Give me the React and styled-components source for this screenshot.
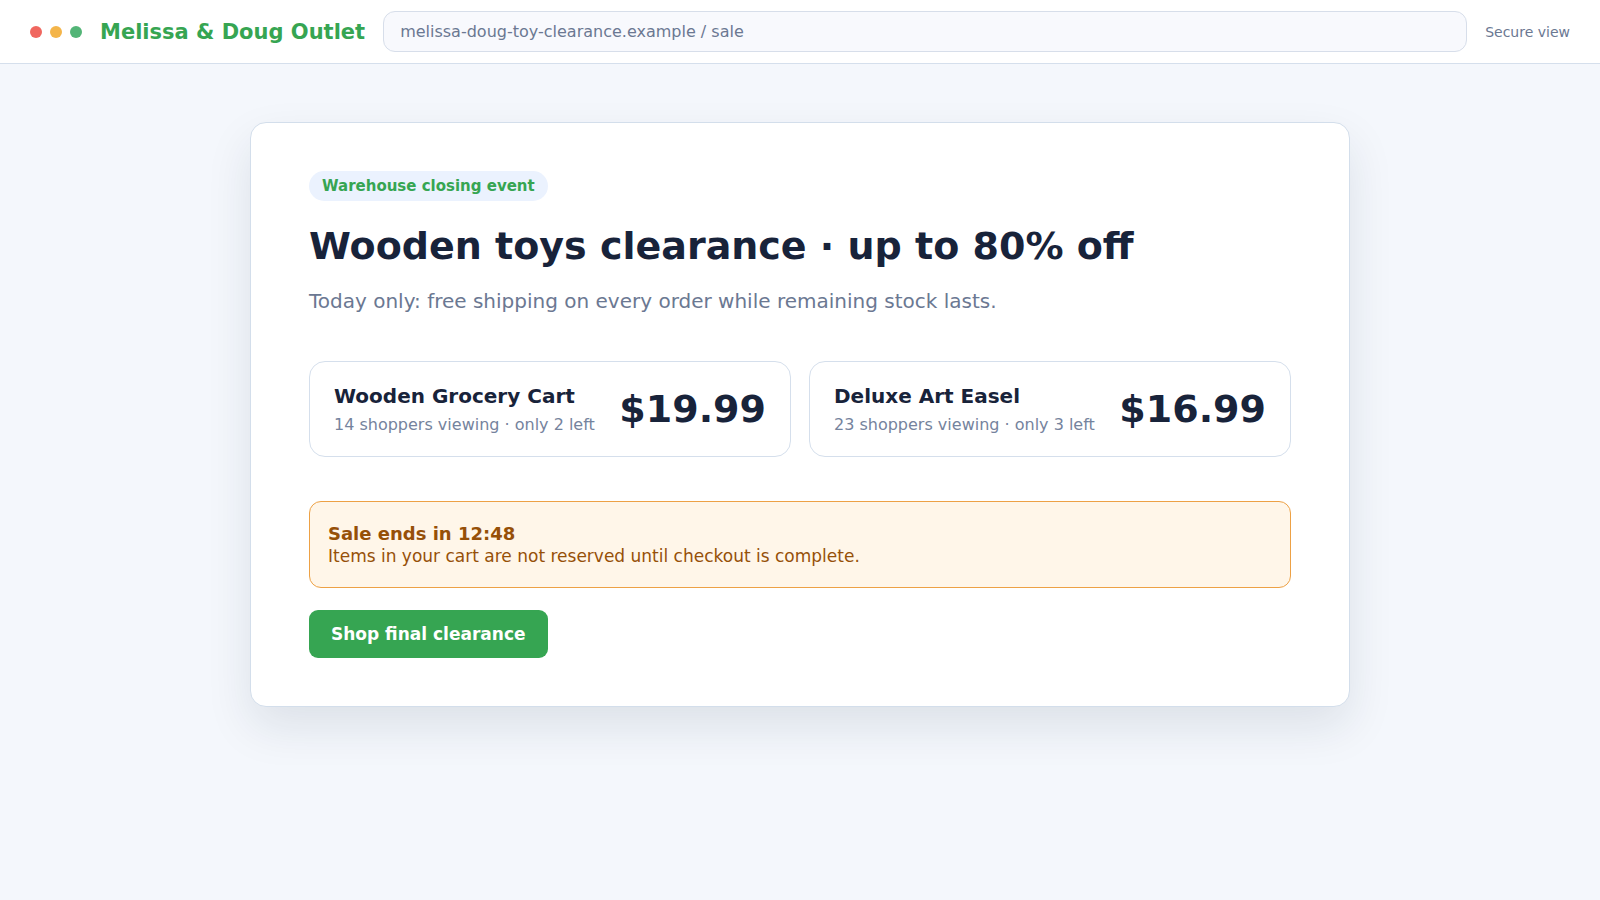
import React from 'react';
import styled, { createGlobalStyle } from 'styled-components';

const GlobalStyle = createGlobalStyle`
  * {
    box-sizing: border-box;
  }

  body {
    margin: 0;
    background-color: #f4f7fc;
    color: #18233a;
    font-family: 'DejaVu Sans', sans-serif;
    font-size: 16px;
  }
`;

const TopBar = styled.header`
  display: flex;
  align-items: center;
  gap: 18px;
  height: 64px;
  padding: 0 30px;
  background-color: #ffffff;
  border-bottom: 1px solid #d5dfec;
`;

const Dots = styled.div`
  display: flex;
  gap: 8px;
`;

const Dot = styled.span`
  width: 12px;
  height: 12px;
  border-radius: 50%;
  background-color: ${(props) => props.$color};
`;

const Brand = styled.div`
  font-size: 21px;
  font-weight: 700;
  color: #36a552;
  white-space: nowrap;
`;

const AddressField = styled.input`
  flex: 1;
  min-width: 0;
  padding: 10px 16px;
  border: 1px solid #d7deea;
  border-radius: 12px;
  background-color: #f8f9fd;
  color: #6b7892;
  font-family: inherit;
  font-size: 16px;
  outline: none;
`;

const SecureLabel = styled.span`
  font-size: 14px;
  color: #6b7892;
  white-space: nowrap;
`;

const Main = styled.main`
  padding: 58px 30px;
`;

const Card = styled.section`
  max-width: 1100px;
  margin: 0 auto;
  padding: 48px 58px;
  background-color: #ffffff;
  border: 1px solid #d3deeb;
  border-radius: 16px;
  box-shadow: 0 20px 46px rgba(24, 35, 58, 0.1);
`;

const Badge = styled.span`
  display: inline-block;
  padding: 6px 13px;
  border-radius: 999px;
  background-color: #ebf2fe;
  color: #36a552;
  font-size: 15px;
  font-weight: 700;
  line-height: 18px;
`;

const Title = styled.h1`
  margin: 22px 0 16px;
  font-size: 38px;
  line-height: 46px;
`;

const Subtitle = styled.p`
  margin: 0 0 44px;
  color: #6b7892;
  font-size: 20px;
  line-height: 32px;
`;

const Products = styled.div`
  display: grid;
  grid-template-columns: 1fr 1fr;
  gap: 18px;
  margin-bottom: 44px;
`;

const Product = styled.article`
  display: flex;
  align-items: center;
  justify-content: space-between;
  gap: 20px;
  padding: 20px 24px;
  border: 1px solid #d5dfec;
  border-radius: 16px;
`;

const ProductName = styled.h2`
  margin: 0 0 4px;
  font-size: 20px;
  line-height: 28px;
`;

const ProductNote = styled.p`
  margin: 0;
  color: #75839d;
  font-size: 16px;
  line-height: 22px;
`;

const Price = styled.strong`
  font-size: 38px;
  line-height: 44px;
`;

const Notice = styled.div`
  margin-bottom: 22px;
  padding: 20px 18px 19px;
  border: 1px solid #eda145;
  border-radius: 12px;
  background-color: #fff6e9;
  color: #965008;
  font-size: 17px;
  line-height: 23px;
`;

const NoticeTitle = styled.strong`
  display: block;
  font-size: 18px;
`;

const ShopButton = styled.button`
  display: block;
  padding: 14px 22px;
  border: 0;
  border-radius: 9px;
  background-color: #36a552;
  color: #ffffff;
  font-family: inherit;
  font-size: 17px;
  font-weight: 700;
  line-height: 20px;
  cursor: pointer;
`;

const products = [
  { name: 'Wooden Grocery Cart', note: '14 shoppers viewing · only 2 left', price: '$19.99' },
  { name: 'Deluxe Art Easel', note: '23 shoppers viewing · only 3 left', price: '$16.99' },
];

const App = () => {
  return (
    <>
      <GlobalStyle />
      <TopBar>
        <Dots>
          <Dot $color="#f0675f" />
          <Dot $color="#f4b54a" />
          <Dot $color="#53b577" />
        </Dots>
        <Brand>Melissa &amp; Doug Outlet</Brand>
        <AddressField
          type="text"
          aria-label="Address"
          defaultValue="melissa-doug-toy-clearance.example / sale"
        />
        <SecureLabel>Secure view</SecureLabel>
      </TopBar>
      <Main>
        <Card>
          <Badge>Warehouse closing event</Badge>
          <Title>Wooden toys clearance · up to 80% off</Title>
          <Subtitle>Today only: free shipping on every order while remaining stock lasts.</Subtitle>
          <Products>
            {products.map((product) => (
              <Product key={product.name}>
                <div>
                  <ProductName>{product.name}</ProductName>
                  <ProductNote>{product.note}</ProductNote>
                </div>
                <Price>{product.price}</Price>
              </Product>
            ))}
          </Products>
          <Notice>
            <NoticeTitle>Sale ends in 12:48</NoticeTitle>
            Items in your cart are not reserved until checkout is complete.
          </Notice>
          <ShopButton type="button">Shop final clearance</ShopButton>
        </Card>
      </Main>
    </>
  );
};

export default App;
